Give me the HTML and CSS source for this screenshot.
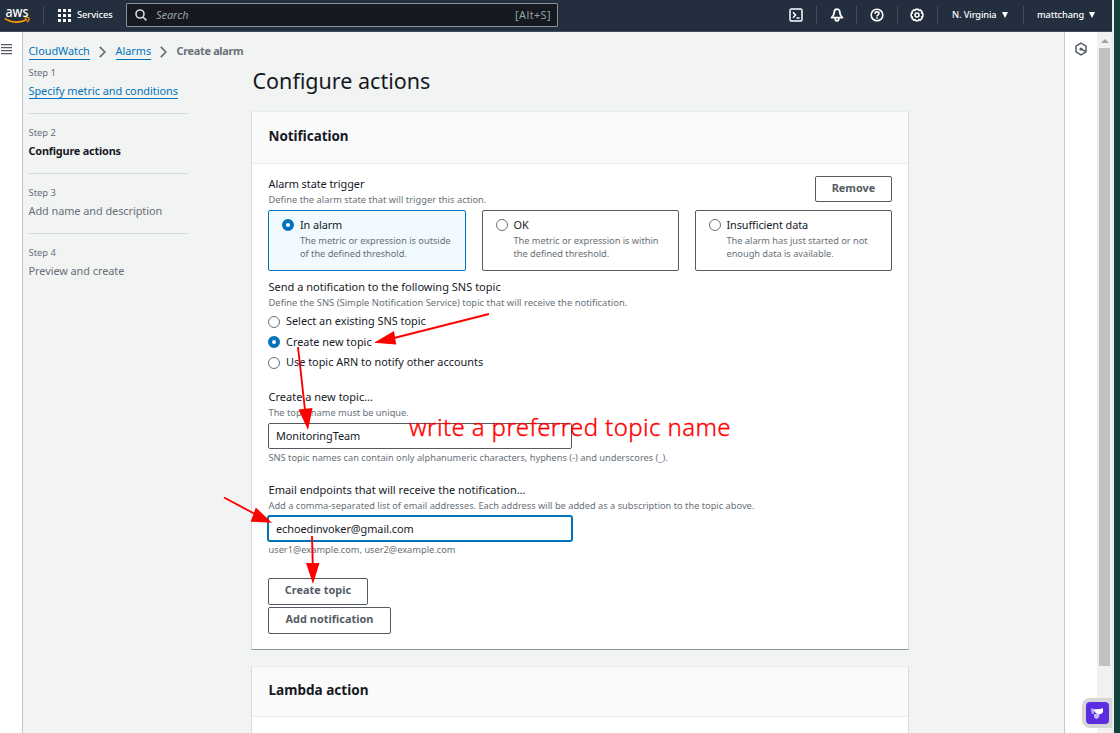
FILE: index.html
```html
<!DOCTYPE html>
<html lang="en">
<head>
<meta charset="utf-8">
<title>Create alarm | CloudWatch</title>
<link rel="stylesheet" href="styles.css">
</head>
<body>
<div class="desktop">
<div class="window">
  <header class="topbar">
    <svg class="logo" width="28" height="24" viewBox="0 -4 28 24"><text x="1.500" y="11.500" textLength="23" lengthAdjust="spacingAndGlyphs" class="logo-text">aws</text><path d="M.8 13.300c6 4.600 15.500 5 22.300 1.300" fill="none" stroke="#f90" stroke-width="1.700"/><path d="M20.500 13.300c2-.8 4.200-.8 4.500-.2s-.3 2.700-1.800 4.200" fill="none" stroke="#f90" stroke-width="1.200"/></svg>
    <span class="divider first"></span>
    <button class="services">
      <svg width="13" height="13" fill="#fff"><path d="M0 0h3v3H0zM5 0h3v3H5zM10 0h3v3h-3zM0 5h3v3H0zM5 5h3v3H5zM10 5h3v3h-3zM0 10h3v3H0zM5 10h3v3H5zM10 10h3v3h-3z"/></svg>
      <span>Services</span>
    </button>
    <div class="search">
      <svg width="12" height="12" fill="none" stroke="#d5dbdb" stroke-width="1.600"><circle cx="5" cy="5" r="4"/><path d="M8 8l3.400 3.400"/></svg>
      <span class="search-label">Search</span>
      <span class="shortcut">[Alt+S]</span>
    </div>
    <nav class="tools">
      <span class="tool"><svg width="14" height="14" fill="none" stroke="#fff" stroke-width="1.500"><rect x="1" y="1" width="12" height="12" rx="1.500"/><path d="M4 4.300L6.500 7 4 9.700M7.500 10h3"/></svg></span>
      <span class="tool"><svg width="14" height="14" fill="none" stroke="#fff" stroke-width="1.800" stroke-linejoin="round"><path d="M7 1.200C4.700 1.200 4.200 3 4.200 4.600c0 2.200-.8 3.200-2.600 5.100h10.800c-1.800-1.900-2.600-2.900-2.600-5.100C9.800 3 9.300 1.200 7 1.200zM5.300 10.500v1q0 1.300 1.700 1.300t1.700-1.300v-1"/></svg></span>
      <span class="tool"><svg width="14" height="14" fill="none" stroke="#fff" stroke-width="1.600"><circle cx="7" cy="7" r="5.800"/><path d="M5 5.700C5 4.500 5.800 3.900 7 3.900s2 .7 2 1.600C9 6.800 7 6.800 7 8.400M7 9.200v1.500"/></svg></span>
      <span class="tool"><svg width="14" height="14" fill="none" stroke="#fff" stroke-width="1.600" stroke-linejoin="round"><path d="M5.600 1.200h2.800l.5 1.200 1.300-.5 1.900 1.900-.5 1.300 1.200.5v2.800l-1.200.5.5 1.300-1.900 1.900-1.300-.5-.5 1.200H5.600l-.5-1.200-1.300.5-1.900-1.900.5-1.300-1.200-.5V5.600l1.200-.5-.5-1.300 1.900-1.900 1.300.5z"/><circle cx="7" cy="7" r="2"/></svg></span>
      <span class="menu region">N. Virginia <i class="caret"></i></span>
      <span class="menu user">mattchang <i class="caret"></i></span>
    </nav>
  </header>

  <div class="workspace">
    <aside class="rail"><svg width="12" height="12" fill="#545b64"><path d="M1 1h11v1.300H1zM1 4h11v1.300H1zM1 7h11v1.300H1zM1 10h11v1.300H1z"/></svg></aside>

    <section class="page">
      <div class="sidebar">
        <nav class="crumbs">
          <a class="link c1">CloudWatch</a>
          <svg class="chev" width="7" height="12" fill="none" stroke="#687078" stroke-width="1.700"><path d="M.8.800L5.800 6 .8 11.200"/></svg>
          <a class="link c2">Alarms</a>
          <svg class="chev" width="7" height="12" fill="none" stroke="#687078" stroke-width="1.700"><path d="M.8.800L5.800 6 .8 11.200"/></svg>
          <span class="here">Create alarm</span>
        </nav>
        <ol class="steps">
          <li><small>Step 1</small><a class="link step-link">Specify metric and conditions</a></li>
          <li><small>Step 2</small><b>Configure actions</b></li>
          <li><small>Step 3</small><span>Add name and description</span></li>
          <li><small>Step 4</small><span>Preview and create</span></li>
        </ol>
      </div>

      <main class="content">
        <h1>Configure actions</h1>
        <article class="card notification">
          <h2>Notification</h2>
          <div class="card-body">
            <div class="trigger-row">
              <div>
                <div class="label inset">Alarm state trigger</div>
                <div class="hint h-a inset">Define the alarm state that will trigger this action.</div>
              </div>
              <button class="btn remove">Remove</button>
            </div>
            <div class="tiles">
              <div class="tile selected"><i class="radio on"></i><div><div class="label">In alarm</div><p class="hint">The metric or expression is outside<br>of the defined threshold.</p></div></div>
              <div class="tile"><i class="radio"></i><div><div class="label">OK</div><p class="hint">The metric or expression is within<br>the defined threshold.</p></div></div>
              <div class="tile"><i class="radio"></i><div><div class="label">Insufficient data</div><p class="hint">The alarm has just started or not<br>enough data is available.</p></div></div>
            </div>
            <div class="field sns">
              <div class="label wide inset">Send a notification to the following SNS topic</div>
              <div class="hint h-b inset">Define the SNS (Simple Notification Service) topic that will receive the notification.</div>
              <div class="options">
                <div class="option"><i class="radio"></i><span>Select an existing SNS topic</span></div>
                <div class="option"><i class="radio on"></i><span>Create new topic</span></div>
                <div class="option"><i class="radio"></i><span>Use topic ARN to notify other accounts</span></div>
              </div>
            </div>
            <div class="field topic">
              <div class="label wide inset">Create a new topic…</div>
              <div class="hint inset">The topic name must be unique.</div>
              <div class="input">MonitoringTeam</div>
              <div class="hint below inset">SNS topic names can contain only alphanumeric characters, hyphens (-) and underscores (_).</div>
            </div>
            <div class="field email">
              <div class="label wide inset">Email endpoints that will receive the notification…</div>
              <div class="hint inset">Add a comma-separated list of email addresses. Each address will be added as a subscription to the topic above.</div>
              <div class="input focused">echoedinvoker@gmail.com</div>
              <div class="hint below inset">user1@example.com, user2@example.com</div>
            </div>
            <div class="buttons">
              <button class="btn create">Create topic</button>
              <button class="btn add">Add notification</button>
            </div>
          </div>
        </article>
        <article class="card lambda"><h2>Lambda action</h2></article>
      </main>
    </section>

    <aside class="info"><svg width="14" height="14" fill="none" stroke="#545b64" stroke-width="1.500"><path d="M7 1.200l5 2.900v5.800l-5 2.900-5-2.900V4.100z"/><circle cx="7" cy="7" r="1.600" fill="#545b64" stroke="none"/><path d="M7 7l5 2.700"/></svg></aside>
    <div class="scrollbar"><i class="up"></i><i class="thumb"></i></div>
  </div>
</div>
</div>

<div class="widget"><div class="widget-icon"><svg width="15" height="13"><path d="M1 1l3 1.300v4.500L2 7Q1 5 1 1z" fill="#b9a4f7"/><path d="M4 7h5.500q0 4-2.500 4.700Q4 12 4 9z" fill="#c9b9fa"/><path d="M3.500 2.300q5 .3 9.500-1v3.500Q12.500 7.300 9.500 7 5 7.500 3.500 2.300z" fill="#fff"/></svg></div></div>

<svg class="annotations" width="1120" height="733">
  <g stroke="#f00" stroke-width="1.900"><path d="M489 314L394 338M298 347L305 410M224 497.500L255 514M312 536L312.800 565"/></g>
  <g fill="#f00"><path d="M374 342.700L394 331 396.200 344.500zM308 430L298.500 409.500 312.500 408zM272 522.700L255.800 507.500 250.700 521.700zM313 584L306 563H319.500z"/></g>
  <text x="409" y="436" textLength="321.500" class="note">write a preferred topic name</text>
</svg>
</body>
</html>
```

FILE: styles.css
```css
* { box-sizing: border-box; }
body { margin: 0; height: 733px; overflow: hidden; position: relative; font: 10.9px/14px "Noto Sans", "Open Sans", sans-serif; color: #16191f; }
h1, h2, p, ol { margin: 0; padding: 0; font-weight: 400; }
button { font: inherit; }
svg { display: block; flex: none; }
.desktop { height: 733px; padding-right: 6px; background: #14423f; }
.window { height: 733px; padding-right: 2px; background: #e9ebed; display: flex; flex-direction: column; white-space: nowrap; }

.topbar { height: 32px; flex: none; display: flex; align-items: center; background: #232f3e; border-bottom: 1px solid #414d5c; color: #fff; }
.logo { margin: -5px 0 0 4px; overflow: visible; }
.logo-text { font-size: 14px; font-weight: 500; fill: #fff; }
.divider { width: 1px; height: 18px; background: #414d5c; margin: -2px 13px 0 11px; }
.services { display: flex; align-items: center; gap: 6px; width: 69px; padding: 0 0 0 1px; border: 0; background: none; color: #fff; font-size: 9.400px; font-weight: 500; letter-spacing: -.1px; }
.services span { margin-top: -2px; }
.search { display: flex; align-items: center; width: 432px; height: 24px; margin: -1px 0 0; padding: 0 6px 0 8px; border: 1px solid #879596; border-radius: 1px; background: #16191f; color: #95a5a6; }
.search-label { margin-left: 9px; font-style: italic; font-size: 10.900px; }
.shortcut { margin-left: auto; font-size: 10.800px; letter-spacing: .45px; }
.tools { display: flex; align-items: center; height: 18px; margin: -2px 0 0 auto; }
.tool { width: 40.300px; height: 18px; border-right: 1px solid #414d5c; display: flex; align-items: center; justify-content: center; }
.tool svg { margin-top: 1px; }
.menu { display: flex; align-items: center; font-size: 9.200px; font-weight: 500; letter-spacing: -.1px; height: 18px; }
.region { width: 86px; padding-left: 14px; border-right: 1px solid #414d5c; }
.user { width: 88px; padding-left: 13px; }
.caret { border: 3.500px solid transparent; border-top: 6px solid #fff; border-bottom: 0; margin-left: 5px; }

.workspace { flex: 1; display: flex; min-height: 0; }
.rail { width: 23px; background: #fff; border-right: 1px solid #c3c9c9; padding: 11px 0 0 0; }
.page { flex: 1; background: #f2f3f3; display: flex; min-width: 0; }
.sidebar { width: 228px; padding: 12px 0 0 5px; }
.crumbs { display: flex; align-items: center; height: 14px; padding-left: .5px; color: #687078; }
.link { color: #0073bb; border-bottom: 1px solid #0073bb; height: 16px; margin-top: 1px; }
.c1 { width: 61.500px; letter-spacing: -.03px; }
.c2 { width: 35.500px; letter-spacing: -.03px; }
.chev { margin: 1px 10px 0 9px; }
.chev + .c2 { margin-left: -.5px; }
.here { font-weight: 700; letter-spacing: -.3px; margin-left: -.5px; }
.steps { list-style: none; width: 160px; margin-top: 8px; }
.steps li { height: 60px; padding-left: .5px; color: #687078; }
.steps li + li { border-top: 1px solid #d5dbdb; padding-top: 12px; }
.steps li:first-child { height: 47px; }
.steps small { display: block; font-size: 9.400px; line-height: 13px; margin-bottom: 5px; }
.steps b { color: #16191f; letter-spacing: -.2px; }
.steps span, .steps b { display: block; line-height: 14px; }
.steps span { letter-spacing: -.05px; }
.step-link { display: inline-block; height: 15px; margin-top: -.5px; letter-spacing: -.03px; }

.content { width: 658px; padding-top: 36px; }
h1 { font-size: 21.500px; line-height: 26px; padding-left: 1.500px; }
.card { background: #fff; border: 1px solid #d5dbdb; border-top-color: #eaeded; }
.notification { height: 539px; margin-top: 17px; border-bottom-color: #879596; }
.lambda { height: 90px; margin-top: 16px; }
h2 { height: 52px; padding: 15px 0 0 16.500px; background: #fafafa; border-bottom: 1px solid #eaeded; font-size: 13.400px; line-height: 18px; font-weight: 700; }
.lambda h2 { height: 50px; padding-top: 14px; font-size: 13.550px; }
.card-body { padding: 13px 16px 0; }
.inset { padding-left: .5px; }
.label { line-height: 14px; letter-spacing: -.05px; }
.label.wide { font-size: 11px; letter-spacing: .01px; }
.hint { color: #687078; font-size: 9.250px; line-height: 13px; }
.h-a { letter-spacing: .04px; }
.h-b { font-size: 9.400px; letter-spacing: .01px; }
.trigger-row { display: flex; justify-content: space-between; height: 33px; }
.trigger-row .hint, .field > .hint { margin-top: 2px; }
.btn { display: block; height: 27px; padding: 0 0 3px; border: 1px solid #545b64; border-radius: 2px; background: #fff; color: #545b64; font-weight: 700; font-size: 10.900px; line-height: 14px; }
.remove { width: 77px; height: 26px; margin-top: -1px; padding-bottom: 2px; }
.tiles { display: grid; grid-template-columns: 198px 197px 197px; gap: 16px; }
.tile { height: 61px; padding: 8px 0 0 13px; display: flex; gap: 6px; border: 1px solid #545b64; border-radius: 2px; }
.tile.selected { background: #f1faff; border-color: #0073bb; }
.tile:not(.selected) { padding-left: 12.500px; }
.tile .label { margin-top: -1px; letter-spacing: -.1px; }
.tile .hint { margin-top: 2px; letter-spacing: -.03px; }
.radio { display: block; flex: none; width: 12px; height: 12px; border: 1px solid #687078; border-radius: 50%; background: #fff; }
.radio.on { border: 4px solid #0073bb; }
.field > .input { margin-top: 4px; }
.sns { padding-top: 9px; height: 119px; }
.options { padding-top: 2px; }
.option { display: flex; align-items: center; gap: 6px; height: 20.500px; }
.option .radio { margin-top: 1px; }
.topic { height: 93px; }
.email { height: 95px; }
.input { display: flex; align-items: center; width: 304px; height: 26px; padding-left: 7px; border: 1px solid #545b64; border-radius: 2px; background: #fff; letter-spacing: -.06px; }
.input.focused { height: 25px; border-color: #0073bb; box-shadow: 0 0 0 1px #0073bb; }
.field > .below { margin-top: 2px; }
.buttons { display: grid; gap: 2px; }
.create { width: 100px; letter-spacing: .03px; }
.add { width: 123px; letter-spacing: .03px; }

.info { width: 33px; background: #fff; border-left: 1px solid #c3c9c9; padding: 10px 0 0 9px; }
.scrollbar { width: 15px; background: #f1f1f1; display: flex; flex-direction: column; align-items: center; padding-top: 7px; }
.up { border: 4px solid transparent; border-bottom: 4px solid #a3a3a3; border-top: 0; }
.thumb { width: 11px; height: 618px; margin-top: 5px; background: #c1c1c1; }

.widget { position: absolute; left: 1082px; top: 698px; width: 30px; height: 30px; padding: 4px; border-radius: 8px 0 0 8px; background: #d6d6d8; }
.widget-icon { width: 23px; height: 22px; border-radius: 4px; background: #5b2be0; padding: 5px 4px; }
.annotations { position: absolute; left: 0; top: 0; }
.note { font: 300 24px "Noto Sans", "Open Sans", sans-serif; fill: #f00; stroke: #f00; stroke-width: .35px; }
```
